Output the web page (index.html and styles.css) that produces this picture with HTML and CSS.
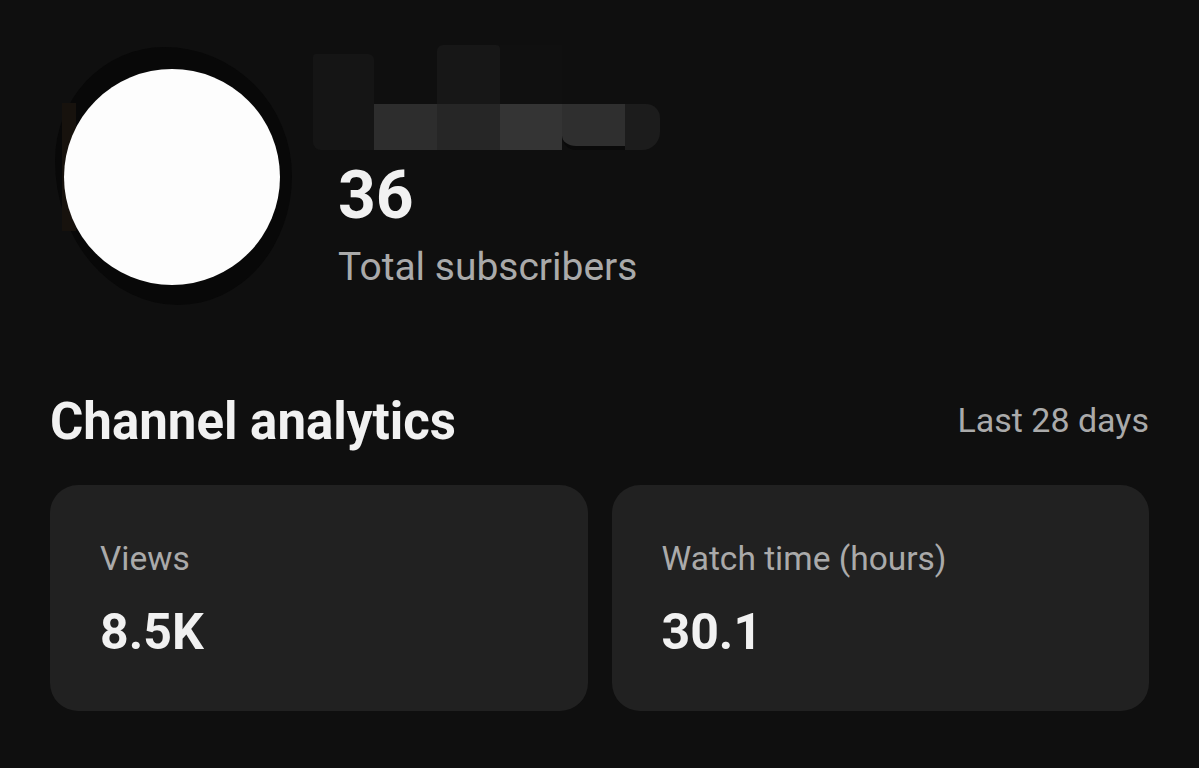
FILE: index.html
```html
<!DOCTYPE html>
<html lang="en">
<head>
<meta charset="utf-8">
<title>Channel dashboard</title>
<link rel="stylesheet" href="styles.css">
</head>
<body>
<main class="page">
  <section class="header">
    <div class="avatar-wrap">
      <div class="avatar-patch"></div>
      <div class="avatar"></div>
    </div>
    <div class="info">
      <div class="name-blur" aria-label="Channel name (hidden)">
        <span class="px c1"></span><span class="px c2"></span><span class="px c3"></span><span class="px c4"></span><span class="px c5"></span><span class="px c6"></span>
        <span class="px d2"></span><span class="px d3"></span><span class="px d4"></span><span class="px d5"></span><span class="px d6"></span>
      </div>
      <div class="subs-count">36</div>
      <div class="subs-label">Total subscribers</div>
    </div>
  </section>

  <section class="analytics">
    <div class="title-row">
      <h2 class="title">Channel analytics</h2>
      <span class="period">Last 28 days</span>
    </div>
    <div class="cards">
      <div class="card">
        <div class="card-label">Views</div>
        <div class="card-value">8.5K</div>
      </div>
      <div class="card">
        <div class="card-label">Watch time (hours)</div>
        <div class="card-value">30.1</div>
      </div>
    </div>
  </section>
</main>
</body>
</html>
```

FILE: styles.css
```css
* { box-sizing: border-box; }

html, body {
  margin: 0;
  padding: 0;
  background: #0f0f0f;
}

body {
  font-family: Roboto, "Liberation Sans", Arial, sans-serif;
  color: #f1f1f1;
  width: 1199px;
  height: 768px;
  overflow: hidden;
}

.page {
  padding: 45px 50px 0 50px;
}

/* Header */
.header {
  display: flex;
  align-items: flex-start;
}

.avatar-wrap {
  position: relative;
  width: 237px;
  height: 258px;
  margin-top: 2px;
  margin-left: 5px;
  padding: 22px 12px 20px 9px;
  background: #080808;
  border-radius: 46% 54% 48% 52% / 44% 50% 50% 56%;
}

.avatar-patch {
  position: absolute;
  left: 7px;
  top: 56px;
  width: 14px;
  height: 128px;
  background: #17120d;
}

.avatar {
  position: relative;
  width: 216px;
  height: 216px;
  border-radius: 50%;
  background: #fdfdfd;
}

.info {
  margin-left: 46px;
  display: flex;
  flex-direction: column;
}

.name-blur {
  margin-left: -25px;
  display: grid;
  grid-template-columns: 61px 63px 63px 62px 63px 35px;
  grid-template-rows: 59px 46px;
  width: 347px;
  height: 105px;
}

.px { display: block; }
.c1 { grid-row: 1 / 3; background: #151515; border-radius: 3px 6px 0 8px; margin-top: 9px; }
.c2 { background: #0f0f0f; }
.c3 { background: #171717; border-radius: 6px 4px 0 0; }
.c4 { background: #101010; }
.c5 { background: #0f0f0f; }
.c6 { background: #0f0f0f; }
.d2 { background: #2d2d2d; }
.d3 { background: #262626; }
.d4 { background: #343434; }
.d5 { background: #2f2f2f; border-bottom: 4px solid #0a0a0a; border-radius: 0 0 0 14px; }
.d6 { background: #1c1c1c; border-radius: 0 14px 18px 0; }

.subs-count {
  margin-top: 13px;
  font-size: 66px;
  line-height: 66px;
  font-weight: 700;
  color: #f1f1f1;
}

.subs-label {
  margin-top: 19px;
  font-size: 39px;
  line-height: 39px;
  color: #aaaaaa;
}

/* Analytics */
.analytics {
  margin-top: 87px;
}

.title-row {
  display: flex;
  justify-content: space-between;
  align-items: center;
}

.title {
  margin: 0;
  font-size: 51px;
  line-height: 60px;
  font-weight: 700;
  color: #f1f1f1;
}

.period {
  font-size: 34px;
  line-height: 40px;
  margin-bottom: 4px;
  color: #aaaaaa;
}

.cards {
  margin-top: 33px;
  display: grid;
  grid-template-columns: 1fr 1fr;
  gap: 24px;
}

.card {
  height: 226px;
  background: #212121;
  border-radius: 28px;
  padding: 54px 50px 0 50px;
}

.card-label {
  font-size: 33.5px;
  line-height: 40px;
  color: #aaaaaa;
}

.card-value {
  margin-top: 23px;
  font-size: 50px;
  line-height: 60px;
  font-weight: 700;
  color: #f1f1f1;
}
```
